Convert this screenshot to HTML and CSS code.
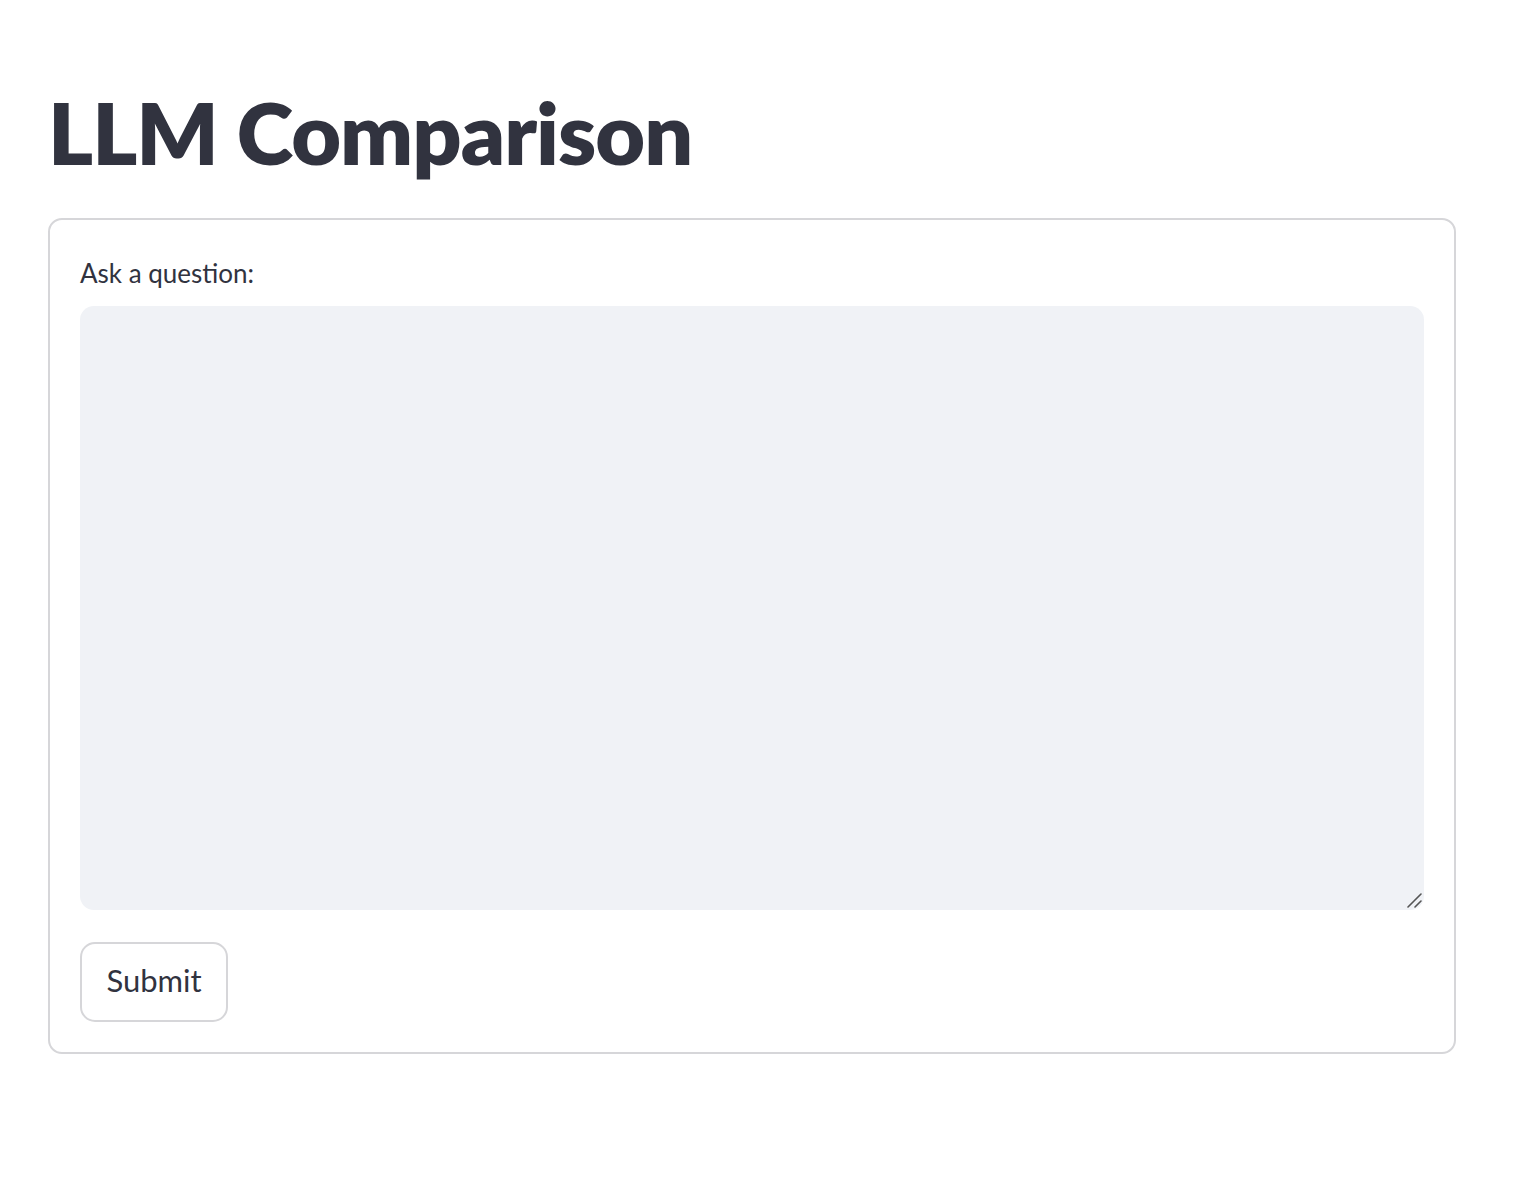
FILE: index.html
```html
<!DOCTYPE html>
<html>
<head>
<meta charset="utf-8">
<link rel="stylesheet" href="styles.css">
</head>
<body>
<main class="page">
  <h1 class="title">LLM Comparison</h1>
  <form class="form">
    <label class="label" for="q">Ask a question:</label>
    <div class="area-wrap">
      <textarea id="q" class="area"></textarea>
      <svg class="grip" width="16" height="16" viewBox="0 0 16 16"><path d="M2 15 L15 2 M9 15 L15 9" stroke="#555" stroke-width="1.6" stroke-linecap="round" fill="none"/></svg>
    </div>
    <button type="button" class="btn">Submit</button>
  </form>
</main>
</body>
</html>
```
FILE: styles.css
```css
html, body { margin: 0; padding: 0; background: #fff; }
body { font-family: Lato, "Noto Sans", sans-serif; color: #31333f; }
.page { padding: 0 78px 0 48px; }
.title {
  margin: 0;
  padding-top: 82px;
  font-size: 86px;
  line-height: 100px;
  font-weight: 800;
  letter-spacing: -1px;
  height: 136px;
}
.form {
  display: flex;
  flex-direction: column;
  align-items: flex-start;
  border: 2px solid #d6d6d9;
  border-radius: 14px;
  padding: 30px 30px 30px 30px;
  margin: 0;
}
.label { font-size: 26px; line-height: 46px; margin-bottom: 10px; }
.area-wrap { position: relative; width: 100%; height: 604px; margin-bottom: 32px; }
.area {
  display: block;
  box-sizing: border-box;
  width: 100%;
  height: 100%;
  border: none;
  border-radius: 14px;
  background: #f0f2f6;
  resize: none;
  outline: none;
}
.grip { position: absolute; right: 2px; bottom: 2px; }
.btn {
  box-sizing: border-box;
  width: 148px;
  height: 80px;
  border: 2px solid #d6d6d9;
  border-radius: 15px;
  background: #fff;
  color: #31333f;
  font-family: Lato, "Noto Sans", sans-serif;
  font-size: 31px;
  line-height: 1;
  padding: 0 0 4px 0;
}
```
